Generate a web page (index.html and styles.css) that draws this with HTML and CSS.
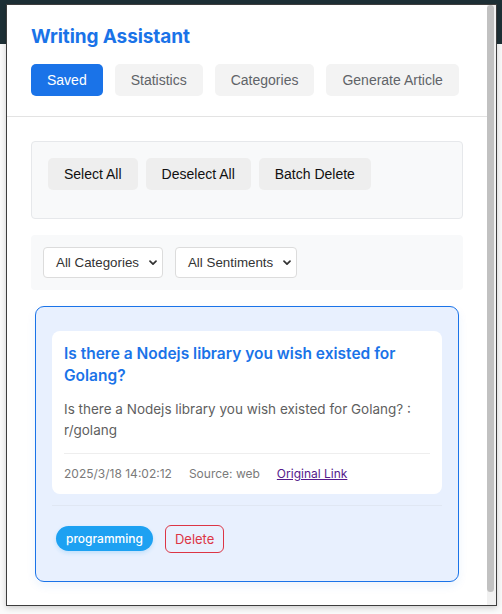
FILE: index.html
```html
<!DOCTYPE html>
<html lang="en">
<head>
<meta charset="utf-8">
<title>Writing Assistant</title>
<link rel="stylesheet" href="styles.css">
</head>
<body>
<div class="popup">
  <div class="content">
    <header class="header">
      <h1 class="title">Writing Assistant</h1>
      <nav class="tabs">
        <button class="tab tab-active">Saved</button>
        <button class="tab">Statistics</button>
        <button class="tab">Categories</button>
        <button class="tab">Generate Article</button>
      </nav>
    </header>
    <main class="main">
      <section class="batch-box">
        <div class="batch-row">
          <button class="batch-btn">Select All</button>
          <button class="batch-btn">Deselect All</button>
          <button class="batch-btn">Batch Delete</button>
        </div>
      </section>
      <section class="filter-box">
        <div class="select">All Categories<svg class="chev" viewBox="0 0 8 6" width="8" height="6"><path d="M1 1.2l3 3 3-3" fill="none" stroke="#333" stroke-width="1.7" stroke-linecap="round" stroke-linejoin="round"/></svg></div>
        <div class="select">All Sentiments<svg class="chev" viewBox="0 0 8 6" width="8" height="6"><path d="M1 1.2l3 3 3-3" fill="none" stroke="#333" stroke-width="1.7" stroke-linecap="round" stroke-linejoin="round"/></svg></div>
      </section>
      <div class="list">
        <article class="card">
          <div class="card-inner">
            <h2 class="card-title">Is there a Nodejs library you wish existed for Golang?</h2>
            <p class="card-desc">Is there a Nodejs library you wish existed for Golang? : r/golang</p>
            <div class="card-meta">
              <span>2025/3/18 14:02:12</span>
              <span>Source: web</span>
              <a class="meta-link" href="#">Original Link</a>
            </div>
          </div>
          <div class="card-footer">
            <span class="tag">programming</span>
            <button class="delete-btn">Delete</button>
          </div>
        </article>
      </div>
    </main>
  </div>
  <div class="scrollbar"><div class="thumb"></div></div>
</div>
</body>
</html>
```
FILE: styles.css
```css
html, body {
  margin: 0;
  height: 100%;
}
body {
  background: linear-gradient(#1e3036 0, #1e3036 44px, #fafafa 44px);
  font-family: "Liberation Sans", Arial, sans-serif;
  position: relative;
  overflow: hidden;
}
.popup {
  position: absolute;
  left: 6px;
  top: 4px;
  width: 489px;
  height: 600px;
  border: 1px solid #3d3d3d;
  background: #fff;
  display: flex;
  box-shadow: 0 2px 6px rgba(0,0,0,0.18);
}
.content {
  width: 480px;
  flex: none;
}
.scrollbar {
  flex: 1;
  background: #f1f1f1;
  display: flex;
  flex-direction: column;
}
.thumb {
  height: 587px;
  width: 7px;
  background: #c1c1c1;
  border-radius: 4px;
}
.header {
  padding: 20px 24px 20px;
  border-bottom: 1px solid #e3e3e3;
}
.title {
  margin: 0 0 15px;
  font-family: Inter, "Liberation Sans", sans-serif;
  font-size: 19px;
  line-height: 24px;
  font-weight: 700;
  color: #1a73e8;
  letter-spacing: -0.1px;
}
.tabs {
  display: flex;
  gap: 12px;
}
.tab {
  border: none;
  border-radius: 5px;
  background: #f3f3f3;
  color: #5f6368;
  font-family: "Liberation Sans", Arial, sans-serif;
  font-size: 14px;
  height: 32px;
  padding: 0 16px;
}
.tab-active {
  background: #1a73e8;
  color: #fff;
}
.main {
  padding: 24px 24px 0;
  display: flex;
  flex-direction: column;
  gap: 16px;
}
.batch-box {
  background: #f8f9fa;
  border: 1px solid #e6e8eb;
  border-radius: 4px;
  padding: 16px 16px 28px;
}
.batch-row {
  display: flex;
  gap: 8px;
}
.batch-btn {
  border: none;
  border-radius: 5px;
  background: #eeeeee;
  color: #111;
  font-family: "Liberation Sans", Arial, sans-serif;
  font-size: 14px;
  height: 32px;
  padding: 0 16px;
}
.filter-box {
  background: #f8f9fa;
  border-radius: 4px;
  padding: 12px;
  display: flex;
  gap: 12px;
}
.select {
  height: 31px;
  box-sizing: border-box;
  border: 1px solid #dcdcdc;
  border-radius: 4px;
  background: #fff;
  color: #333;
  font-size: 13.33px;
  display: flex;
  align-items: center;
  padding: 0 5px 0 12px;
  gap: 10px;
}
.chev {
  display: block;
}
.list {
  padding: 0 4px;
}
.card {
  background: #e8f0fe;
  border: 1px solid #1a73e8;
  border-radius: 9px;
  padding: 24px 16px 28px;
  box-shadow: 0 4px 10px rgba(26,115,232,0.08);
  font-family: Inter, "Liberation Sans", sans-serif;
}
.card-inner {
  background: #fff;
  border-radius: 8px;
  padding: 12px 12px 11px;
}
.card-title {
  margin: 0 0 12px;
  font-size: 15.5px;
  line-height: 22px;
  font-weight: 600;
  color: #1a73e8;
}
.card-desc {
  margin: 0 0 12px;
  font-size: 13.5px;
  line-height: 21px;
  color: #5f5f5f;
}
.card-meta {
  border-top: 1px solid #eeeeee;
  padding-top: 11px;
  display: flex;
  gap: 17px;
  font-size: 12px;
  line-height: 18px;
  color: #7a7a7a;
}
.meta-link {
  color: #551a8b;
  text-decoration: underline;
}
.card-footer {
  margin-top: 11px;
  border-top: 1px solid #e0e7f3;
  padding: 19px 4px 0;
  display: flex;
  align-items: center;
  gap: 12px;
}
.tag {
  background: #1da1f2;
  color: #fff;
  font-size: 12px;
  font-weight: 500;
  height: 25px;
  line-height: 25px;
  padding: 0 10px;
  border-radius: 13px;
  margin-bottom: 1px;
  box-shadow: 0 2px 4px rgba(29,161,242,0.2);
}
.delete-btn {
  background: transparent;
  border: 1px solid #dc3545;
  border-radius: 6px;
  color: #dc3545;
  font-family: Inter, "Liberation Sans", sans-serif;
  font-size: 13px;
  height: 28px;
  padding: 0 9px;
}
```
